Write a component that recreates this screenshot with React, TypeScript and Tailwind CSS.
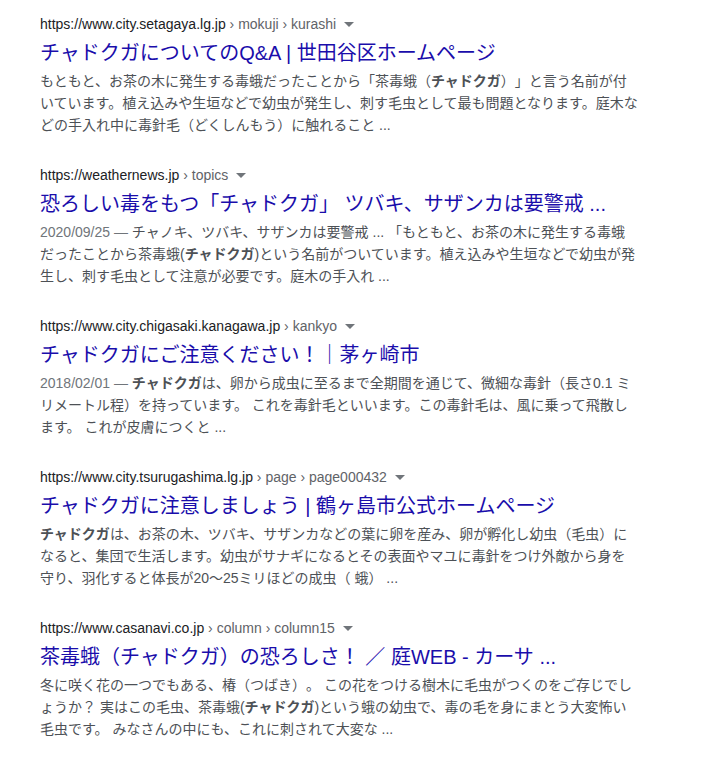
import React from "react";

// One search result: url row, title link, three snippet lines
interface Result {
  domain: string;
  crumbs: string;
  title: React.ReactNode;
  lines: React.ReactNode[];
}

const B = ({ children }: { children: React.ReactNode }) => (
  <b className="font-bold text-[#4d5156]">{children}</b>
);

const D = ({ children }: { children: React.ReactNode }) => (
  <span className="text-[#70757a]">{children}</span>
);

const results: Result[] = [
  {
    domain: "https://www.city.setagaya.lg.jp",
    crumbs: " › mokuji › kurashi",
    title: "チャドクガについてのQ&A | 世田谷区ホームページ",
    lines: [
      <>
        もともと、お茶の木に発生する毒蛾だったことから「茶毒蛾（<B>チャドクガ</B>）」と言う名前が付
      </>,
      "いています。植え込みや生垣などで幼虫が発生し、刺す毛虫として最も問題となります。庭木な",
      "どの手入れ中に毒針毛（どくしんもう）に触れること ...",
    ],
  },
  {
    domain: "https://weathernews.jp",
    crumbs: " › topics",
    title: "恐ろしい毒をもつ「チャドクガ」 ツバキ、サザンカは要警戒 ...",
    lines: [
      <>
        <D>2020/09/25 — </D>チャノキ、ツバキ、サザンカは要警戒 ... 「もともと、お茶の木に発生する毒蛾
      </>,
      <>
        だったことから茶毒蛾(<B>チャドクガ</B>)という名前がついています。植え込みや生垣などで幼虫が発
      </>,
      "生し、刺す毛虫として注意が必要です。庭木の手入れ ...",
    ],
  },
  {
    domain: "https://www.city.chigasaki.kanagawa.jp",
    crumbs: " › kankyo",
    title: "チャドクガにご注意ください！｜茅ヶ崎市",
    lines: [
      <>
        <D>2018/02/01 — </D>
        <B>チャドクガ</B>は、卵から成虫に至るまで全期間を通じて、微細な毒針（長さ0.1 ミ
      </>,
      "リメートル程）を持っています。 これを毒針毛といいます。この毒針毛は、風に乗って飛散し",
      "ます。 これが皮膚につくと ...",
    ],
  },
  {
    domain: "https://www.city.tsurugashima.lg.jp",
    crumbs: " › page › page000432",
    title: "チャドクガに注意しましょう | 鶴ヶ島市公式ホームページ",
    lines: [
      <>
        <B>チャドクガ</B>は、お茶の木、ツバキ、サザンカなどの葉に卵を産み、卵が孵化し幼虫（毛虫）に
      </>,
      "なると、集団で生活します。幼虫がサナギになるとその表面やマユに毒針をつけ外敵から身を",
      "守り、羽化すると体長が20〜25ミリほどの成虫（ 蛾） ...",
    ],
  },
  {
    domain: "https://www.casanavi.co.jp",
    crumbs: " › column › column15",
    title: "茶毒蛾（チャドクガ）の恐ろしさ！ ／ 庭WEB - カーサ ...",
    lines: [
      "冬に咲く花の一つでもある、椿（つばき）。 この花をつける樹木に毛虫がつくのをご存じでし",
      <>
        ょうか？ 実はこの毛虫、茶毒蛾(<B>チャドクガ</B>)という蛾の幼虫で、毒の毛を身にまとう大変怖い
      </>,
      "毛虫です。 みなさんの中にも、これに刺されて大変な ...",
    ],
  },
];

function ResultItem({ r }: { r: Result }) {
  return (
    <div className="mb-[29px]">
      {/* url + breadcrumbs */}
      <div className="flex h-5 items-center text-sm leading-5 whitespace-nowrap">
        <span className="text-[#202124]">{r.domain}</span>
        <span className="whitespace-pre text-[#5f6368]">{r.crumbs}</span>
        <svg className="ml-[8px] mt-[1px]" width="10" height="5" viewBox="0 0 10 5">
          <path d="M0 0h10L5 5z" fill="#70757a" />
        </svg>
      </div>
      <h3 className="mt-[6px] text-[20px] leading-[26px] font-normal text-[#1a0dab] whitespace-pre">
        {r.title}
      </h3>
      <div className="mt-[4px] text-sm leading-[22px] text-[#4d5156]">
        {r.lines.map((l, i) => (
          <div key={i} className="whitespace-pre">
            {l}
          </div>
        ))}
      </div>
    </div>
  );
}

export default function App() {
  return (
    <div className="min-h-screen bg-white pl-10 pt-[14px] font-['Liberation_Sans','Noto_Sans_CJK_JP',sans-serif] [text-spacing-trim:space-all]">
      {results.map((r) => (
        <ResultItem key={r.domain} r={r} />
      ))}
    </div>
  );
}
